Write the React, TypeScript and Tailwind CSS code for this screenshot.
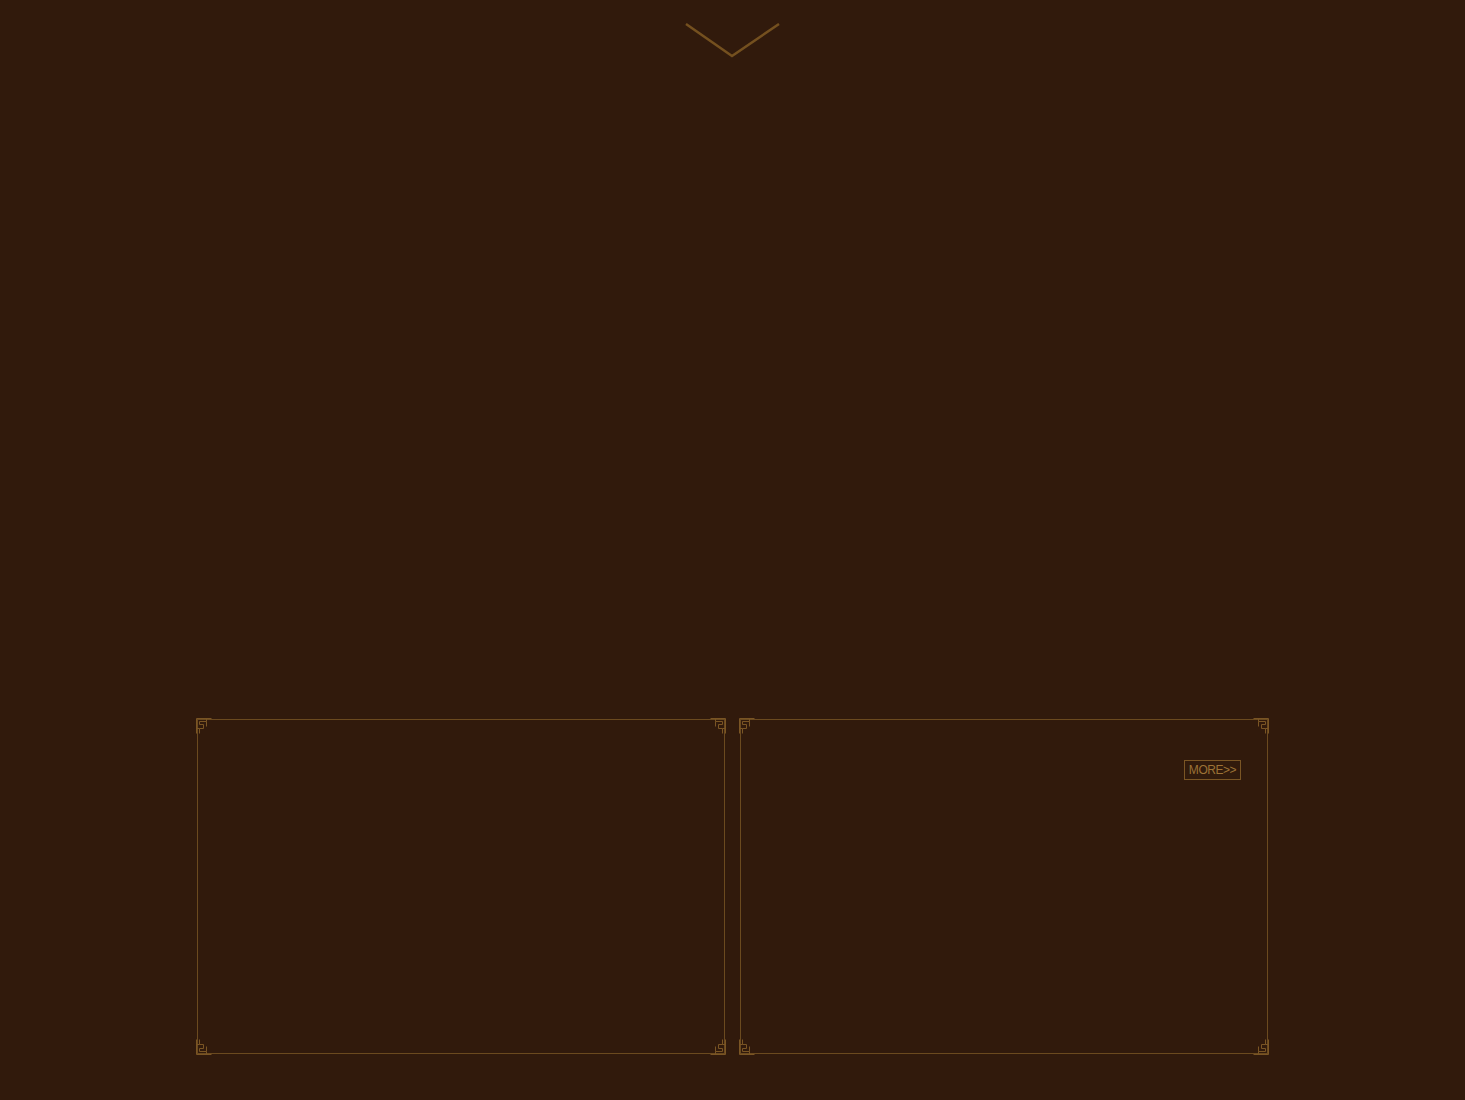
function Corner({ className }: { className: string }) {
  return (
    <svg
      className={`absolute w-4 h-4 ${className}`}
      viewBox="0 0 16 16"
      fill="none"
      stroke="#7a5524"
      strokeWidth="1"
      aria-hidden="true"
    >
      <path d="M0.5 15.5 V0.5 H15.5" />
      <path d="M3.5 15.5 V10.5 H7.5 V6.5 H3.5 V3.5 H10.5 V8.5" />
      <path d="M0.5 10.5 H3.5" />
      <path d="M10.5 3.5 V0.5" />
    </svg>
  );
}

function Panel({ children }: { children?: React.ReactNode }) {
  return (
    <div className="relative w-[530px] h-[337px]">
      <div className="absolute inset-[1px] border border-[#6b4a1f]" />
      <Corner className="top-0 left-0" />
      <Corner className="top-0 right-0 -scale-x-100" />
      <Corner className="bottom-0 left-0 -scale-y-100" />
      <Corner className="bottom-0 right-0 -scale-100" />
      {children}
    </div>
  );
}

export default function App() {
  return (
    <div className="w-full min-h-[1100px] bg-[#311a0c] flex flex-col items-center font-['Liberation_Sans',Arial,sans-serif]">
      <div className="pt-[23px] h-[718px]">
        <svg width="96" height="36" viewBox="0 0 96 36" fill="none" aria-hidden="true">
          <path d="M1 1 L47 33 L94 1" stroke="#74501f" strokeWidth="2.5" />
        </svg>
      </div>
      <div className="flex gap-[13px]">
        <Panel />
        <Panel>
          <div className="absolute top-[42px] right-[28px] border border-[#7a5524] px-[4px] h-[20px] flex items-center text-[12px] text-[#9c7236] tracking-[-0.04em]">
            MORE&gt;&gt;
          </div>
        </Panel>
      </div>
    </div>
  );
}
